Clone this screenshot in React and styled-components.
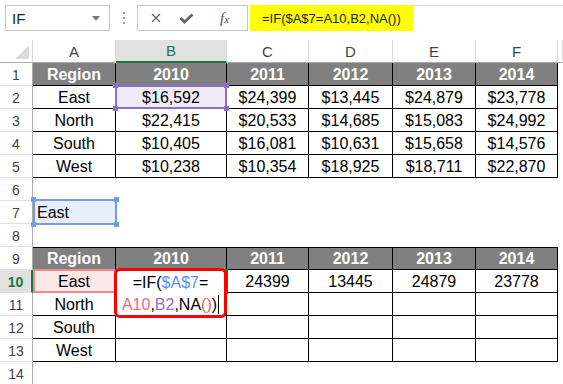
import styled, { createGlobalStyle, css } from "styled-components";

const GlobalStyle = createGlobalStyle`
  html, body { margin: 0; padding: 0; background: #fff; }
  body { font-family: "Liberation Sans", Arial, sans-serif; }
`;

const Page = styled.div`
  width: 563px;
  height: 384px;
  overflow: hidden;
  background: #fff;
`;

// ---- formula bar ----

const Toolbar = styled.div`
  display: flex;
  align-items: stretch;
  height: 26px;
  padding: 5px 0 9px 5px;
`;

const NameBox = styled.div`
  width: 105px;
  box-sizing: border-box;
  border: 1px solid #c6c6c6;
  display: flex;
  align-items: center;
  justify-content: space-between;
  padding: 0 9px 0 6px;
  font-size: 15px;
  color: #222;
`;

const Caret = styled.span`
  width: 0;
  height: 0;
  border-left: 4px solid transparent;
  border-right: 4px solid transparent;
  border-top: 5px solid #777;
`;

const Kebab = styled.div`
  width: 27px;
  display: flex;
  flex-direction: column;
  align-items: center;
  justify-content: center;
  gap: 3px;
`;

const Dot = styled.span`
  width: 2px;
  height: 2px;
  background: #9a9a9a;
`;

const FxBox = styled.div`
  width: 111px;
  box-sizing: border-box;
  border: 1px solid #c6c6c6;
  display: flex;
  align-items: center;
  padding-left: 13px;

  svg + svg {
    margin-left: 18px;
  }
`;

const Fx = styled.span`
  margin-left: 26px;
  font-family: "Liberation Serif", "Times New Roman", serif;
  font-style: italic;
  font-size: 15px;
  color: #555;

  small {
    font-size: 11px;
  }
`;

const Formula = styled.div`
  flex: 1;
  margin-left: 2px;
  border-top: 1px solid #d4d4d4;
  display: flex;
`;

const Highlight = styled.div`
  margin-top: -1px;
  background: #ffff00;
  display: flex;
  align-items: center;
  padding: 0 12px 0 12px;
  font-size: 13px;
  color: #222;
`;

// ---- sheet ----

const Sheet = styled.div`
  display: grid;
  grid-template-columns: 33px 83px 111px 82px 84px 83px 82px 1fr;
  grid-auto-rows: 23px;
`;

const Corner = styled.div`
  box-sizing: border-box;
  border-right: 1px solid #d9d9d9;
  border-bottom: 1px solid #ababab;
  display: flex;
  align-items: flex-end;
  justify-content: flex-end;
  padding: 0 3px 3px 0;
`;

const ColHead = styled.div`
  box-sizing: border-box;
  display: flex;
  align-items: center;
  justify-content: center;
  font-size: 15px;
  color: #444;
  border-right: 1px solid #d9d9d9;
  border-bottom: 1px solid #ababab;
  ${(p) =>
    p.$active &&
    css`
      background: #e1e1e1;
      color: #217346;
      border-bottom: 2px solid #217346;
    `}
`;

const RowHead = styled.div`
  box-sizing: border-box;
  display: flex;
  align-items: center;
  justify-content: center;
  padding-top: 2px;
  font-size: 14px;
  color: #444;
  border-right: 1px solid #ababab;
  border-bottom: 1px solid #e1e1e1;
  ${(p) =>
    p.$active &&
    css`
      background: #e1e1e1;
      color: #217346;
      font-weight: bold;
      border-right: 2px solid #217346;
    `}
`;

const Cell = styled.div`
  position: relative;
  box-sizing: border-box;
  display: flex;
  align-items: center;
  justify-content: ${(p) => (p.$left ? "flex-start" : "center")};
  padding: 1px 0 0 ${(p) => (p.$left ? "4px" : "0")};
  font-size: 16px;
  color: #000;
  background: ${(p) => p.$bg || "transparent"};
  ${(p) =>
    p.$kind === "head" &&
    css`
      background: #808080;
      color: #fff;
      font-weight: bold;
    `}
  ${(p) =>
    (p.$kind === "head" || p.$kind === "data") &&
    css`
      border-right: 1px solid #000;
      border-bottom: 1px solid #000;
    `}
  ${(p) => p.$top && css`border-top: 1px solid #000;`}
`;

const Frame = styled.span`
  position: absolute;
  top: ${(p) => p.$t}px;
  left: ${(p) => p.$l}px;
  right: ${(p) => p.$r}px;
  bottom: ${(p) => p.$b}px;
  border: 2px solid ${(p) => p.$color};
  pointer-events: none;
  z-index: 2;
`;

const Handle = styled.span`
  position: absolute;
  width: 5px;
  height: 5px;
  background: ${(p) => p.$color};
  ${(p) => (p.$y === "t" ? "top: -4px;" : "bottom: -4px;")}
  ${(p) => (p.$x === "l" ? "left: -4px;" : "right: -4px;")}
`;

const EditBox = styled.div`
  position: absolute;
  top: -2px;
  left: -2px;
  width: 113px;
  height: 50px;
  box-sizing: border-box;
  border: 3px solid #ff0000;
  border-radius: 6px;
  background: #fff;
  z-index: 3;
  padding-top: 1px;
  font-size: 16px;
  line-height: 22px;
  text-align: center;
  color: #000;
`;

const Line = styled.div`
  white-space: nowrap;
`;

const Ref = styled.span`
  color: ${(p) => p.$c};
`;

const TextCursor = styled.span`
  display: inline-block;
  width: 1px;
  height: 19px;
  margin-left: 1px;
  background: #000;
  vertical-align: -4px;
`;

function Corners({ color }) {
  return (
    <>
      <Handle $color={color} $x="l" $y="t" />
      <Handle $color={color} $x="r" $y="t" />
      <Handle $color={color} $x="l" $y="b" />
      <Handle $color={color} $x="r" $y="b" />
    </>
  );
}

const cols = ["A", "B", "C", "D", "E", "F"];
const header = ["Region", "2010", "2011", "2012", "2013", "2014"];
const sales = [
  ["East", "$16,592", "$24,399", "$13,445", "$24,879", "$23,778"],
  ["North", "$22,415", "$20,533", "$14,685", "$15,083", "$24,992"],
  ["South", "$10,405", "$16,081", "$10,631", "$15,658", "$14,576"],
  ["West", "$10,238", "$10,354", "$18,925", "$18,711", "$22,870"],
];
const lookup = ["24399", "13445", "24879", "23778"];
const regions = ["North", "South", "West"];

function renderCell(r, c) {
  const key = `${r}-${c}`;
  if (r === 1 || r === 9) {
    return (
      <Cell key={key} $kind="head" $top={r === 9}>
        {header[c]}
      </Cell>
    );
  }
  if (r >= 2 && r <= 5) {
    if (r === 2 && c === 1) {
      return (
        <Cell key={key} $kind="data" $bg="#efecf8">
          {sales[0][1]}
          <Frame $color="#8e6bcf" $t={-1} $l={-1} $r={-1} $b={-1}>
            <Corners color="#8e6bcf" />
          </Frame>
        </Cell>
      );
    }
    return (
      <Cell key={key} $kind="data">
        {sales[r - 2][c]}
      </Cell>
    );
  }
  if (r === 7 && c === 0) {
    return (
      <Cell key={key} $left $bg="#e8eefb">
        East
        <Frame $color="#6d9eeb" $t={-2} $l={0} $r={-1} $b={-1}>
          <Corners color="#6d9eeb" />
        </Frame>
      </Cell>
    );
  }
  if (r === 10) {
    if (c === 0) {
      return (
        <Cell key={key} $kind="data" $bg="#fde8e8">
          East
          <Frame $color="#ec8b8b" $t={-1} $l={0} $r={-1} $b={-1} />
        </Cell>
      );
    }
    if (c === 1) {
      return (
        <Cell key={key} $kind="data">
          <Frame $color="#217346" $t={-1} $l={-1} $r={-2} $b={-2} />
          <EditBox>
            <Line>
              =IF(<Ref $c="#5b8def">$A$7</Ref>=
            </Line>
            <Line>
              <Ref $c="#ec6a7c">A10</Ref>,<Ref $c="#9a6cd0">B2</Ref>,NA
              <Ref $c="#e85b5b">()</Ref>)
              <TextCursor />
            </Line>
          </EditBox>
        </Cell>
      );
    }
    return (
      <Cell key={key} $kind="data">
        {lookup[c - 2]}
      </Cell>
    );
  }
  if (r >= 11 && r <= 13) {
    return (
      <Cell key={key} $kind="data">
        {c === 0 ? regions[r - 11] : ""}
      </Cell>
    );
  }
  return <Cell key={key} />;
}

function RowGroup({ r }) {
  return (
    <>
      <RowHead $active={r === 10}>{r}</RowHead>
      {cols.map((_, c) => renderCell(r, c))}
      <Cell />
    </>
  );
}

export default function App() {
  const rows = Array.from({ length: 14 }, (_, i) => i + 1);

  return (
    <Page>
      <GlobalStyle />
      <Toolbar>
        <NameBox>
          IF
          <Caret />
        </NameBox>
        <Kebab>
          <Dot />
          <Dot />
          <Dot />
        </Kebab>
        <FxBox>
          <svg width="10" height="10" viewBox="0 0 10 10">
            <path d="M1 1 L9 9 M9 1 L1 9" stroke="#666" strokeWidth="1.4" fill="none" />
          </svg>
          <svg width="15" height="11" viewBox="0 0 15 11">
            <path d="M1.5 5 L5.5 9 L13.5 1.5" stroke="#666" strokeWidth="2.8" fill="none" />
          </svg>
          <Fx>
            f<small>x</small>
          </Fx>
        </FxBox>
        <Formula>
          <Highlight>=IF($A$7=A10,B2,NA())</Highlight>
        </Formula>
      </Toolbar>

      <Sheet>
        <Corner>
          <svg width="14" height="14" viewBox="0 0 14 14">
            <path d="M14 0 L14 14 L0 14 Z" fill="#dcdcdc" />
          </svg>
        </Corner>
        {cols.map((c) => (
          <ColHead key={c} $active={c === "B"}>
            {c}
          </ColHead>
        ))}
        <ColHead />

        {rows.map((r) => (
          <RowGroup key={r} r={r} />
        ))}
      </Sheet>
    </Page>
  );
}
